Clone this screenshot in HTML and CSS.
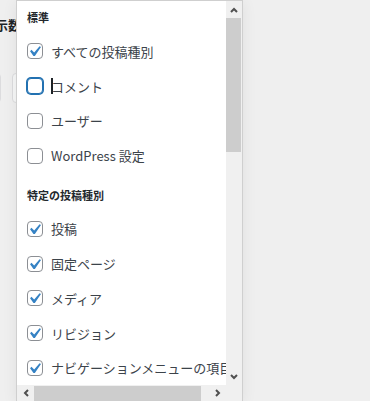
FILE: index.html
```html
<!DOCTYPE html>
<html lang="ja">
<head>
    <meta charset="UTF-8">
    <meta name="viewport" content="width=device-width, initial-scale=1.0">
    <title>投稿種別の選択</title>
    <link rel="stylesheet" href="styles.css">
</head>
<body>

    <div class="page">
        <h2 class="page-title">表示数</h2>
        <div class="fields">
            <span class="field field-a"></span>
            <span class="field field-b"></span>
        </div>
    </div>

    <div class="dropdown">
        <div class="dropdown-body">
            <div class="group-title">標準</div>
            <label class="option"><span class="cb"><svg viewBox="0 0 20 20"><path d="M14.83 4.89l1.34.94-5.81 8.38H9.02L5.78 9.67l1.34-1.25 2.57 2.57z"/></svg></span>すべての投稿種別</label>
            <label class="option"><span class="cb cb-focus"></span><span class="caret"></span>コメント</label>
            <label class="option"><span class="cb"></span>ユーザー</label>
            <label class="option"><span class="cb"></span>WordPress 設定</label>

            <div class="group-title group-gap">特定の投稿種別</div>
            <label class="option"><span class="cb"><svg viewBox="0 0 20 20"><path d="M14.83 4.89l1.34.94-5.81 8.38H9.02L5.78 9.67l1.34-1.25 2.57 2.57z"/></svg></span>投稿</label>
            <label class="option"><span class="cb"><svg viewBox="0 0 20 20"><path d="M14.83 4.89l1.34.94-5.81 8.38H9.02L5.78 9.67l1.34-1.25 2.57 2.57z"/></svg></span>固定ページ</label>
            <label class="option"><span class="cb"><svg viewBox="0 0 20 20"><path d="M14.83 4.89l1.34.94-5.81 8.38H9.02L5.78 9.67l1.34-1.25 2.57 2.57z"/></svg></span>メディア</label>
            <label class="option"><span class="cb"><svg viewBox="0 0 20 20"><path d="M14.83 4.89l1.34.94-5.81 8.38H9.02L5.78 9.67l1.34-1.25 2.57 2.57z"/></svg></span>リビジョン</label>
            <label class="option"><span class="cb"><svg viewBox="0 0 20 20"><path d="M14.83 4.89l1.34.94-5.81 8.38H9.02L5.78 9.67l1.34-1.25 2.57 2.57z"/></svg></span>ナビゲーションメニューの項目</label>
        </div>

        <div class="vbar">
            <span class="sb-btn"><svg width="8" height="6" viewBox="0 0 8 6"><polyline points="1,5 4,2 7,5"/></svg></span>
            <span class="vthumb"></span>
            <span class="sb-track"></span>
            <span class="sb-btn"><svg width="8" height="6" viewBox="0 0 8 6"><polyline points="1,1 4,4 7,1"/></svg></span>
        </div>

        <div class="hbar">
            <span class="sb-btn sb-left"><svg width="6" height="8" viewBox="0 0 6 8"><polyline points="5,1 2,4 5,7"/></svg></span>
            <span class="hthumb"></span>
            <span class="sb-track"></span>
            <span class="sb-btn"><svg width="6" height="8" viewBox="0 0 6 8"><polyline points="1,1 4,4 1,7"/></svg></span>
        </div>

        <div class="corner"></div>
    </div>

</body>
</html>
```

FILE: styles.css
```css
body {
    font-family: "Noto Sans CJK JP", "Noto Sans", sans-serif;
    background-color: #efefef;
    margin: 0;
    height: 401px;
    overflow: hidden;
    position: relative;
}

.page-title {
    margin: 16px 0 0 -18px;
    font-size: 13px;
    line-height: 18px;
    font-weight: bold;
    color: #1d2327;
}

.fields {
    display: flex;
    margin-top: 39px;
}

.field {
    height: 30px;
    box-sizing: border-box;
    border: 1px solid #dcdcde;
    border-radius: 4px;
    background-color: #f6f7f7;
}

.field-a {
    margin-left: -40px;
    width: 41px;
}

.field-b {
    margin-left: 11px;
    width: 80px;
}

/* panneau déroulant */
.dropdown {
    position: absolute;
    left: 16px;
    top: 0;
    width: 227px;
    height: 402px;
    box-sizing: border-box;
    border: 1px solid #cfcfcf;
    background-color: #fff;
    box-shadow: 0 2px 14px rgba(0, 0, 0, 0.07);
    display: grid;
    grid-template-columns: 209px 16px;
    grid-template-rows: 384px 16px;
}

.dropdown-body {
    overflow: hidden;
    padding: 7px 0 0 10px;
    white-space: nowrap;
}

.group-title {
    font-size: 11px;
    line-height: 18px;
    font-weight: bold;
    color: #23282d;
    margin-bottom: 8px;
}

.group-gap {
    margin-top: 12.5px;
}

.option {
    display: flex;
    align-items: center;
    height: 34.75px;
    font-size: 13px;
    color: #3c434a;
}

.cb {
    flex: none;
    width: 16px;
    height: 16px;
    box-sizing: border-box;
    border: 1px solid #8c8f94;
    border-radius: 4px;
    background-color: #fff;
    margin-right: 8px;
}

.cb svg {
    display: block;
    width: 21px;
    height: 21px;
    margin: -3px 0 0 -4px;
    fill: #3582c4;
}

.cb-focus {
    border-color: #2271b1;
    box-shadow: 0 0 0 1px #2271b1;
}

.caret {
    flex: none;
    width: 2px;
    height: 16px;
    margin-right: -2px;
    background-color: #1d2327;
}

/* barres de défilement */
.vbar {
    display: flex;
    flex-direction: column;
    background-color: #f0f0f0;
}

.hbar {
    display: flex;
    background-color: #f0f0f0;
}

.corner {
    background-color: #f0f0f0;
}

.sb-btn {
    flex: none;
    width: 16px;
    height: 16px;
    display: flex;
    align-items: center;
    justify-content: center;
}

.vbar .sb-btn:first-child {
    height: 17px;
}

.sb-left {
    width: 17px;
}

.sb-btn svg {
    fill: none;
    stroke: #505050;
    stroke-width: 2;
}

.vthumb {
    flex: none;
    height: 134px;
    margin-right: 1px;
    background-color: #cdcdcd;
}

.hthumb {
    flex: none;
    width: 167px;
    margin-top: 1px;
    background-color: #cdcdcd;
}

.sb-track {
    flex: 1;
}
```
